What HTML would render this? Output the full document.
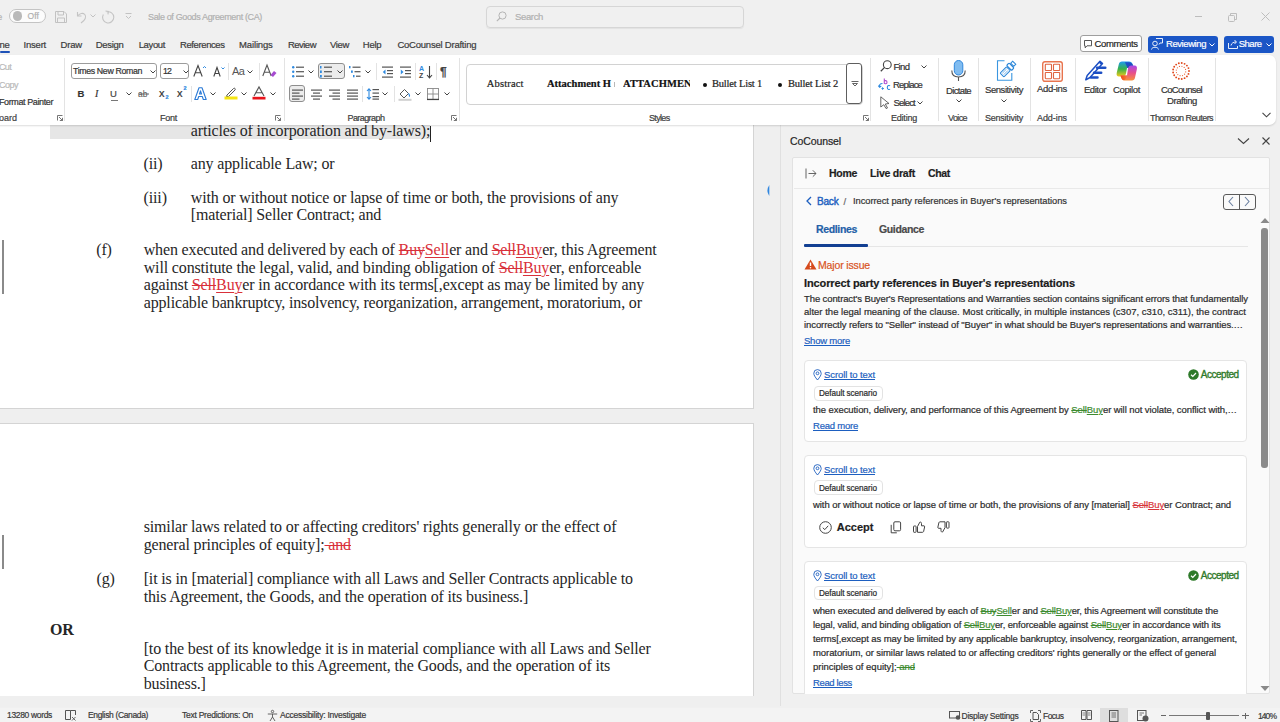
<!DOCTYPE html>
<html><head><meta charset="utf-8">
<style>
*{box-sizing:border-box;margin:0;padding:0}
html,body{width:1280px;height:722px;overflow:hidden;background:#f0f0f0;font-family:"Liberation Sans",sans-serif;color:#262626;position:relative}
.a{position:absolute;white-space:nowrap}
div.a{-webkit-text-stroke:0.2px currentColor}
svg.a{overflow:visible}
.del{color:#d9303a;text-decoration:line-through;text-decoration-thickness:1px}
.ins{color:#d9303a;text-decoration:underline;text-decoration-thickness:1px;text-underline-offset:2px}
.lnk{color:#1d5fc0;text-decoration:underline;text-decoration-thickness:1px;text-underline-offset:0.8px}
.gdel{color:#3d8b2f;text-decoration:line-through;text-decoration-thickness:1px}
.gins{color:#3d8b2f;text-decoration:underline;text-decoration-thickness:1px;text-underline-offset:0.8px}
.rdel{color:#d8353a;text-decoration:line-through;text-decoration-thickness:1px}
.rins{color:#d8353a;text-decoration:underline;text-decoration-thickness:1px;text-underline-offset:0.8px}
</style></head><body>
<div class="a" style="left:0;top:125px;width:780px;height:582px;background:#efefef;overflow:hidden">
<div class="a" style="left:-20px;top:-20px;width:774px;height:304px;background:#fff;border-right:1px solid #d4d4d4;border-bottom:1px solid #d4d4d4"></div>
<div class="a" style="left:-20px;top:298px;width:774px;height:273px;background:#fff;border-right:1px solid #d4d4d4;border-top:1px solid #d4d4d4"></div>
<div class="a" style="left:50px;top:0px;width:380px;height:13.6px;background:#e6e6e6"></div>
<div class="a" style="left:429.5px;top:1px;width:1.0px;height:16px;background:#222"></div>
<div class="a" style="left:2px;top:115px;width:1.5px;height:54px;background:#8a8a8a"></div>
<div class="a" style="left:2px;top:410px;width:1.5px;height:34px;background:#8a8a8a"></div>
<svg class="a" style="left:765px;top:59px" width="6" height="13" viewBox="0 0 6 13"><path d="M4.3 1 Q0.6 6.5 4.3 12 Z" fill="#2f86e0"/></svg>
<div class="a" style="left:190.8px;top:-3.50px;font-family:'Liberation Serif',serif;font-size:16px;line-height:18px;letter-spacing:-0.15px;color:#262626;font-weight:400;-webkit-text-stroke:0">articles of incorporation and by-laws);</div>
<div class="a" style="left:143.6px;top:29.95px;font-family:'Liberation Serif',serif;font-size:16px;line-height:18px;letter-spacing:-0.15px;color:#262626;font-weight:400;-webkit-text-stroke:0">(ii)</div>
<div class="a" style="left:190.8px;top:29.95px;font-family:'Liberation Serif',serif;font-size:16px;line-height:18px;letter-spacing:-0.15px;color:#262626;font-weight:400;-webkit-text-stroke:0">any applicable Law; or</div>
<div class="a" style="left:143.6px;top:63.50px;font-family:'Liberation Serif',serif;font-size:16px;line-height:18px;letter-spacing:-0.15px;color:#262626;font-weight:400;-webkit-text-stroke:0">(iii)</div>
<div class="a" style="left:190.8px;top:63.50px;font-family:'Liberation Serif',serif;font-size:16px;line-height:18px;letter-spacing:-0.15px;color:#262626;font-weight:400;-webkit-text-stroke:0">with or without notice or lapse of time or both, the provisions of any</div>
<div class="a" style="left:190.8px;top:81.40px;font-family:'Liberation Serif',serif;font-size:16px;line-height:18px;letter-spacing:-0.15px;color:#262626;font-weight:400;-webkit-text-stroke:0">[material] Seller Contract; and</div>
<div class="a" style="left:96.25px;top:115.60px;font-family:'Liberation Serif',serif;font-size:16px;line-height:18px;letter-spacing:-0.15px;color:#262626;font-weight:400;-webkit-text-stroke:0">(f)</div>
<div class="a" style="left:143.7px;top:115.60px;font-family:'Liberation Serif',serif;font-size:16px;line-height:18px;letter-spacing:-0.15px;color:#262626;font-weight:400;-webkit-text-stroke:0">when executed and delivered by each of <span class="del">Buy</span><span class="ins">Sell</span>er and <span class="del">Sell</span><span class="ins">Buy</span>er, this Agreement</div>
<div class="a" style="left:143.7px;top:133.50px;font-family:'Liberation Serif',serif;font-size:16px;line-height:18px;letter-spacing:-0.15px;color:#262626;font-weight:400;-webkit-text-stroke:0">will constitute the legal, valid, and binding obligation of <span class="del">Sell</span><span class="ins">Buy</span>er, enforceable</div>
<div class="a" style="left:143.7px;top:151.40px;font-family:'Liberation Serif',serif;font-size:16px;line-height:18px;letter-spacing:-0.15px;color:#262626;font-weight:400;-webkit-text-stroke:0">against <span class="del">Sell</span><span class="ins">Buy</span>er in accordance with its terms[,except as may be limited by any</div>
<div class="a" style="left:143.7px;top:169.30px;font-family:'Liberation Serif',serif;font-size:16px;line-height:18px;letter-spacing:-0.15px;color:#262626;font-weight:400;-webkit-text-stroke:0">applicable bankruptcy, insolvency, reorganization, arrangement, moratorium, or</div>
<div class="a" style="left:143.7px;top:392.80px;font-family:'Liberation Serif',serif;font-size:16px;line-height:18px;letter-spacing:-0.15px;color:#262626;font-weight:400;-webkit-text-stroke:0">similar laws related to or affecting creditors' rights generally or the effect of</div>
<div class="a" style="left:143.7px;top:410.70px;font-family:'Liberation Serif',serif;font-size:16px;line-height:18px;letter-spacing:-0.15px;color:#262626;font-weight:400;-webkit-text-stroke:0">general principles of equity];<span class="del"> and</span></div>
<div class="a" style="left:96.6px;top:445.40px;font-family:'Liberation Serif',serif;font-size:16px;line-height:18px;letter-spacing:-0.15px;color:#262626;font-weight:400;-webkit-text-stroke:0">(g)</div>
<div class="a" style="left:143.7px;top:445.40px;font-family:'Liberation Serif',serif;font-size:16px;line-height:18px;letter-spacing:-0.15px;color:#262626;font-weight:400;-webkit-text-stroke:0">[it is in [material] compliance with all Laws and Seller Contracts applicable to</div>
<div class="a" style="left:143.7px;top:463.20px;font-family:'Liberation Serif',serif;font-size:16px;line-height:18px;letter-spacing:-0.15px;color:#262626;font-weight:400;-webkit-text-stroke:0">this Agreement, the Goods, and the operation of its business.]</div>
<div class="a" style="left:50px;top:496.20px;font-family:'Liberation Serif',serif;font-size:16px;line-height:18px;letter-spacing:-0.15px;color:#262626;font-weight:700;-webkit-text-stroke:0">OR</div>
<div class="a" style="left:143.7px;top:514.60px;font-family:'Liberation Serif',serif;font-size:16px;line-height:18px;letter-spacing:-0.15px;color:#262626;font-weight:400;-webkit-text-stroke:0">[to the best of its knowledge it is in material compliance with all Laws and Seller</div>
<div class="a" style="left:143.7px;top:532.20px;font-family:'Liberation Serif',serif;font-size:16px;line-height:18px;letter-spacing:-0.15px;color:#262626;font-weight:400;-webkit-text-stroke:0">Contracts applicable to this Agreement, the Goods, and the operation of its</div>
<div class="a" style="left:143.7px;top:550.20px;font-family:'Liberation Serif',serif;font-size:16px;line-height:18px;letter-spacing:-0.15px;color:#262626;font-weight:400;-webkit-text-stroke:0">business.]</div>
</div>
<div class="a" style="left:779.8px;top:125px;width:1.6000000000000227px;height:581px;background:#e0e0e0"></div>
<div class="a " style="left:790.00px;top:133.65px;font-size:10.5px;line-height:14.7px;color:#242424;font-weight:400;letter-spacing:-0.105px;font-family:'Liberation Sans',sans-serif;">CoCounsel</div>
<svg class="a" style="left:1237px;top:137px;" width="13" height="8" viewBox="0 0 13 8"><path d="M1 1.5 L6.5 6.5 L12 1.5" fill="none" stroke="#444" stroke-width="1.1"/></svg>
<svg class="a" style="left:1261.5px;top:137.2px;" width="8" height="8" viewBox="0 0 8 8"><path d="M0.5 0.5 L7.5 7.5 M7.5 0.5 L0.5 7.5" fill="none" stroke="#444" stroke-width="1.1"/></svg>
<div class="a" style="left:792px;top:157px;width:478px;height:537px;background:#fafafa;border:1px solid #e2e2e2;border-radius:2px;overflow:hidden">
</div>
<div class="a" style="left:793.5px;top:188px;width:475.5px;height:1px;background:#e9e9e9"></div>
<svg class="a" style="left:805px;top:167.5px;" width="12" height="11" viewBox="0 0 12 11"><path d="M1 0.5 V10.5" stroke="#555" stroke-width="0.9"/><path d="M3.5 5.5 H11 M7.8 2.3 L11 5.5 L7.8 8.7" fill="none" stroke="#555" stroke-width="0.9"/></svg>
<div class="a " style="left:829.00px;top:165.85px;font-size:10.5px;line-height:14.7px;color:#1e1e1e;font-weight:700;letter-spacing:-0.293px;font-family:'Liberation Sans',sans-serif;">Home</div>
<div class="a " style="left:870.00px;top:165.85px;font-size:10.5px;line-height:14.7px;color:#1e1e1e;font-weight:700;letter-spacing:-0.226px;font-family:'Liberation Sans',sans-serif;">Live draft</div>
<div class="a " style="left:928.00px;top:165.85px;font-size:10.5px;line-height:14.7px;color:#1e1e1e;font-weight:700;letter-spacing:-0.333px;font-family:'Liberation Sans',sans-serif;">Chat</div>
<svg class="a" style="left:806px;top:196px;" width="6" height="10" viewBox="0 0 6 10"><path d="M5 1 L1 5 L5 9" fill="none" stroke="#1d5fc0" stroke-width="1.3"/></svg>
<div class="a " style="left:817.00px;top:195.00px;font-size:10px;line-height:14.0px;color:#1d5fc0;font-weight:400;letter-spacing:-0.183px;font-family:'Liberation Sans',sans-serif;-webkit-text-stroke:0.4px #1d5fc0">Back</div>
<div class="a " style="left:843.50px;top:195.35px;font-size:9.5px;line-height:13.299999999999999px;color:#666;font-weight:400;letter-spacing:0.000px;font-family:'Liberation Sans',sans-serif;">/</div>
<div class="a " style="left:853.00px;top:195.49px;font-size:9.3px;line-height:13.02px;color:#333;font-weight:400;letter-spacing:-0.034px;font-family:'Liberation Sans',sans-serif;">Incorrect party references in Buyer's representations</div>
<div class="a" style="left:1222.5px;top:193.5px;width:33px;height:16.5px;border:1.3px solid #5a5a5a;border-radius:3px"></div>
<div class="a" style="left:1239px;top:193.5px;width:1.2000000000000455px;height:16.5px;background:#5a5a5a"></div>
<svg class="a" style="left:1227px;top:196px;" width="8" height="11" viewBox="0 0 8 11"><path d="M6 1 L2 5.5 L6 10" fill="none" stroke="#6a7fa0" stroke-width="1.1"/></svg>
<svg class="a" style="left:1243px;top:196px;" width="8" height="11" viewBox="0 0 8 11"><path d="M2 1 L6 5.5 L2 10" fill="none" stroke="#6a7fa0" stroke-width="1.1"/></svg>
<div class="a " style="left:816.00px;top:222.25px;font-size:10.5px;line-height:14.7px;color:#2360a8;font-weight:700;letter-spacing:-0.346px;font-family:'Liberation Sans',sans-serif;">Redlines</div>
<div class="a " style="left:879.00px;top:222.25px;font-size:10.5px;line-height:14.7px;color:#4a4a4a;font-weight:700;letter-spacing:-0.356px;font-family:'Liberation Sans',sans-serif;">Guidance</div>
<div class="a" style="left:868px;top:245.5px;width:380px;height:1.0px;background:#e6e6e6"></div>
<div class="a" style="left:804px;top:243.8px;width:64px;height:3.0px;background:#123f92;border-radius:1px"></div>
<svg class="a" style="left:1259.5px;top:217px;" width="10" height="7" viewBox="0 0 10 7"><path d="M0.5 6 L5 1 L9.5 6 Z" fill="#8a8a8a"/></svg>
<div class="a" style="left:1261.3px;top:228px;width:6.2999999999999545px;height:239.60000000000002px;background:#8a8a8a;border-radius:3px"></div>
<svg class="a" style="left:1259.5px;top:685px;" width="10" height="7" viewBox="0 0 10 7"><path d="M0.5 1 L5 6 L9.5 1 Z" fill="#8a8a8a"/></svg>
<svg class="a" style="left:803.5px;top:259px;" width="13" height="11" viewBox="0 0 13 11"><path d="M6.5 0.5 L12.5 10.5 L0.5 10.5 Z" fill="#d64a1c"/><path d="M6.5 3.5 V7" stroke="#fff" stroke-width="1.4"/><circle cx="6.5" cy="8.7" r="0.8" fill="#fff"/></svg>
<div class="a " style="left:818.00px;top:257.65px;font-size:10.5px;line-height:14.7px;color:#d9531e;font-weight:400;letter-spacing:-0.153px;font-family:'Liberation Sans',sans-serif;">Major issue</div>
<div class="a " style="left:804.00px;top:275.60px;font-size:11px;line-height:15.399999999999999px;color:#1a1a1a;font-weight:700;letter-spacing:-0.116px;font-family:'Liberation Sans',sans-serif;">Incorrect party references in Buyer's representations</div>
<div class="a " style="left:804.00px;top:291.65px;font-size:9.5px;line-height:13.299999999999999px;color:#2b2b2b;font-weight:400;letter-spacing:-0.105px;font-family:'Liberation Sans',sans-serif;">The contract's Buyer's Representations and Warranties section contains significant errors that fundamentally</div>
<div class="a " style="left:804.00px;top:304.95px;font-size:9.5px;line-height:13.299999999999999px;color:#2b2b2b;font-weight:400;letter-spacing:0.013px;font-family:'Liberation Sans',sans-serif;">alter the legal meaning of the clause. Most critically, in multiple instances (c307, c310, c311), the contract</div>
<div class="a " style="left:804.00px;top:318.35px;font-size:9.5px;line-height:13.299999999999999px;color:#2b2b2b;font-weight:400;letter-spacing:-0.086px;font-family:'Liberation Sans',sans-serif;">incorrectly refers to "Seller" instead of "Buyer" in what should be Buyer's representations and warranties.…</div>
<div class="a " style="left:804.00px;top:334.15px;font-size:9.5px;line-height:13.299999999999999px;color:#262626;font-weight:400;letter-spacing:-0.228px;font-family:'Liberation Sans',sans-serif;"><span class="lnk">Show more</span></div>
<div class="a" style="left:804.4px;top:360px;width:443px;height:82px;background:#fff;border:1px solid #e5e5e5;border-radius:4px"></div>
<svg class="a" style="left:813px;top:369px;" width="9" height="12" viewBox="0 0 9 12"><path d="M4.5 11 C2 8 0.8 6 0.8 4.3 A3.7 3.7 0 0 1 8.2 4.3 C8.2 6 7 8 4.5 11 Z" fill="none" stroke="#1d5fc0" stroke-width="0.9"/><circle cx="4.5" cy="4.3" r="1.4" fill="none" stroke="#1d5fc0" stroke-width="0.9"/></svg>
<div class="a " style="left:824.00px;top:368.35px;font-size:9.5px;line-height:13.299999999999999px;color:#262626;font-weight:400;letter-spacing:-0.091px;font-family:'Liberation Sans',sans-serif;"><span class="lnk">Scroll to text</span></div>
<svg class="a" style="left:1187.5px;top:369.1px;" width="11" height="11" viewBox="0 0 11 11"><circle cx="5.5" cy="5.5" r="5.3" fill="#2e7a2a"/><path d="M3 5.7 L4.8 7.4 L8 4" fill="none" stroke="#fff" stroke-width="1.2"/></svg>
<div class="a " style="left:1200.70px;top:367.60px;font-size:10px;line-height:14.0px;color:#2f7a2a;font-weight:400;letter-spacing:-0.462px;font-family:'Liberation Sans',sans-serif;-webkit-text-stroke:0.35px #2f7a2a">Accepted</div>
<div class="a" style="left:813.5px;top:385.5px;width:69px;height:15.0px;background:#fff;border:1px solid #e3e3e3;border-radius:4px"></div>
<div class="a " style="left:819.00px;top:388.06px;font-size:8.2px;line-height:11.479999999999999px;color:#2a2a2a;font-weight:400;letter-spacing:-0.078px;font-family:'Liberation Sans',sans-serif;">Default scenario</div>
<div class="a " style="left:813.00px;top:403.35px;font-size:9.5px;line-height:13.299999999999999px;color:#2b2b2b;font-weight:400;letter-spacing:-0.074px;font-family:'Liberation Sans',sans-serif;">the execution, delivery, and performance of this Agreement by <span class="gdel">Sell</span><span class="gins">Buy</span>er will not violate, conflict with,…</div>
<div class="a " style="left:813.00px;top:419.35px;font-size:9.5px;line-height:13.299999999999999px;color:#262626;font-weight:400;letter-spacing:-0.222px;font-family:'Liberation Sans',sans-serif;"><span class="lnk">Read more</span></div>
<div class="a" style="left:804.4px;top:454.7px;width:443px;height:93.30000000000001px;background:#fff;border:1px solid #e5e5e5;border-radius:4px"></div>
<svg class="a" style="left:813px;top:464px;" width="9" height="12" viewBox="0 0 9 12"><path d="M4.5 11 C2 8 0.8 6 0.8 4.3 A3.7 3.7 0 0 1 8.2 4.3 C8.2 6 7 8 4.5 11 Z" fill="none" stroke="#1d5fc0" stroke-width="0.9"/><circle cx="4.5" cy="4.3" r="1.4" fill="none" stroke="#1d5fc0" stroke-width="0.9"/></svg>
<div class="a " style="left:824.00px;top:463.35px;font-size:9.5px;line-height:13.299999999999999px;color:#262626;font-weight:400;letter-spacing:-0.091px;font-family:'Liberation Sans',sans-serif;"><span class="lnk">Scroll to text</span></div>
<div class="a" style="left:813.5px;top:480.3px;width:69px;height:14.599999999999966px;background:#fff;border:1px solid #e3e3e3;border-radius:4px"></div>
<div class="a " style="left:819.00px;top:482.66px;font-size:8.2px;line-height:11.479999999999999px;color:#2a2a2a;font-weight:400;letter-spacing:-0.078px;font-family:'Liberation Sans',sans-serif;">Default scenario</div>
<div class="a " style="left:813.00px;top:498.25px;font-size:9.5px;line-height:13.299999999999999px;color:#2b2b2b;font-weight:400;letter-spacing:-0.072px;font-family:'Liberation Sans',sans-serif;">with or without notice or lapse of time or both, the provisions of any [material] <span class="rdel">Sell</span><span class="rins">Buy</span>er Contract; and</div>
<svg class="a" style="left:818.5px;top:520.5px;" width="13" height="13" viewBox="0 0 13 13"><circle cx="6.5" cy="6.5" r="5.8" fill="none" stroke="#444" stroke-width="1"/><path d="M3.8 6.8 L5.8 8.6 L9.2 4.8" fill="none" stroke="#444" stroke-width="1"/></svg>
<div class="a " style="left:836.80px;top:519.60px;font-size:11px;line-height:15.399999999999999px;color:#1e1e1e;font-weight:700;letter-spacing:0.003px;font-family:'Liberation Sans',sans-serif;">Accept</div>
<svg class="a" style="left:888.5px;top:520.5px;" width="13" height="13" viewBox="0 0 13 13"><rect x="4.8" y="0.8" width="6.8" height="9" rx="1.2" fill="none" stroke="#444" stroke-width="1"/><path d="M2.2 3.8 V11.8 H7.8" fill="none" stroke="#444" stroke-width="1"/></svg>
<svg class="a" style="left:911.5px;top:520.5px;" width="14" height="13" viewBox="0 0 14 13"><rect x="1.5" y="5" width="2.6" height="6.3" rx="0.6" fill="none" stroke="#444" stroke-width="1"/><path d="M5.5 5.5 L7.8 1.2 C8.5 0.8 9.5 1.2 9.5 2.5 V4.8 H12 C12.5 4.8 12.8 5.3 12.6 6 L11.6 10.5 C11.4 11 11 11.3 10.5 11.3 H5.5 Z" fill="none" stroke="#444" stroke-width="1" stroke-linejoin="round"/></svg>
<svg class="a" style="left:935.5px;top:520.5px;" width="14" height="13" viewBox="0 0 14 13"><rect x="10.4" y="0.8" width="2.6" height="6.3" rx="0.6" fill="none" stroke="#444" stroke-width="1"/><path d="M9 6.6 L6.7 10.9 C6 11.3 5 10.9 5 9.6 V7.3 H2.5 C2 7.3 1.7 6.8 1.9 6.1 L2.9 1.6 C3.1 1.1 3.5 0.8 4 0.8 H9 Z" fill="none" stroke="#444" stroke-width="1" stroke-linejoin="round"/></svg>
<div class="a" style="left:793px;top:157px;width:476px;height:537px;overflow:hidden">
<div class="a" style="left:11.4px;top:404px;width:443px;height:200px;background:#fff;border:1px solid #e5e5e5;border-radius:4px"></div>
</div>
<svg class="a" style="left:813px;top:569.7px;" width="9" height="12" viewBox="0 0 9 12"><path d="M4.5 11 C2 8 0.8 6 0.8 4.3 A3.7 3.7 0 0 1 8.2 4.3 C8.2 6 7 8 4.5 11 Z" fill="none" stroke="#1d5fc0" stroke-width="0.9"/><circle cx="4.5" cy="4.3" r="1.4" fill="none" stroke="#1d5fc0" stroke-width="0.9"/></svg>
<div class="a " style="left:824.00px;top:569.05px;font-size:9.5px;line-height:13.299999999999999px;color:#262626;font-weight:400;letter-spacing:-0.091px;font-family:'Liberation Sans',sans-serif;"><span class="lnk">Scroll to text</span></div>
<svg class="a" style="left:1187.5px;top:570.0px;" width="11" height="11" viewBox="0 0 11 11"><circle cx="5.5" cy="5.5" r="5.3" fill="#2e7a2a"/><path d="M3 5.7 L4.8 7.4 L8 4" fill="none" stroke="#fff" stroke-width="1.2"/></svg>
<div class="a " style="left:1200.70px;top:568.50px;font-size:10px;line-height:14.0px;color:#2f7a2a;font-weight:400;letter-spacing:-0.462px;font-family:'Liberation Sans',sans-serif;-webkit-text-stroke:0.35px #2f7a2a">Accepted</div>
<div class="a" style="left:813.5px;top:586px;width:69px;height:14px;background:#fff;border:1px solid #e3e3e3;border-radius:4px"></div>
<div class="a " style="left:819.00px;top:588.06px;font-size:8.2px;line-height:11.479999999999999px;color:#2a2a2a;font-weight:400;letter-spacing:-0.078px;font-family:'Liberation Sans',sans-serif;">Default scenario</div>
<div class="a " style="left:813.00px;top:603.95px;font-size:9.5px;line-height:13.299999999999999px;color:#2b2b2b;font-weight:400;letter-spacing:-0.135px;font-family:'Liberation Sans',sans-serif;">when executed and delivered by each of <span class="gdel">Buy</span><span class="gins">Sell</span>er and <span class="gdel">Sell</span><span class="gins">Buy</span>er, this Agreement will constitute the</div>
<div class="a " style="left:813.00px;top:618.05px;font-size:9.5px;line-height:13.299999999999999px;color:#2b2b2b;font-weight:400;letter-spacing:-0.129px;font-family:'Liberation Sans',sans-serif;">legal, valid, and binding obligation of <span class="gdel">Sell</span><span class="gins">Buy</span>er, enforceable against <span class="gdel">Sell</span><span class="gins">Buy</span>er in accordance with its</div>
<div class="a " style="left:813.00px;top:632.05px;font-size:9.5px;line-height:13.299999999999999px;color:#2b2b2b;font-weight:400;letter-spacing:-0.100px;font-family:'Liberation Sans',sans-serif;">terms[,except as may be limited by any applicable bankruptcy, insolvency, reorganization, arrangement,</div>
<div class="a " style="left:813.00px;top:646.15px;font-size:9.5px;line-height:13.299999999999999px;color:#2b2b2b;font-weight:400;letter-spacing:-0.074px;font-family:'Liberation Sans',sans-serif;">moratorium, or similar laws related to or affecting creditors' rights generally or the effect of general</div>
<div class="a " style="left:813.00px;top:660.25px;font-size:9.5px;line-height:13.299999999999999px;color:#2b2b2b;font-weight:400;letter-spacing:-0.017px;font-family:'Liberation Sans',sans-serif;">principles of equity];<span class="gdel"> and</span></div>
<div class="a " style="left:813.00px;top:676.35px;font-size:9.5px;line-height:13.299999999999999px;color:#262626;font-weight:400;letter-spacing:-0.361px;font-family:'Liberation Sans',sans-serif;"><span class="lnk">Read less</span></div>
<div class="a " style="left:-3.00px;top:10.35px;font-size:9.5px;line-height:13.299999999999999px;color:#b4b4b4;font-weight:400;letter-spacing:0.000px;font-family:'Liberation Sans',sans-serif;">e</div>
<div class="a" style="left:9px;top:9px;width:37px;height:13.8px;border:1px solid #c4c4c4;border-radius:7px;background:#fcfcfc"></div>
<div class="a" style="left:12.6px;top:11.4px;width:9.2px;height:9.2px;border-radius:5px;background:#b9b9b9"></div>
<div class="a " style="left:27.50px;top:10.55px;font-size:8.5px;line-height:11.899999999999999px;color:#b0b0b0;font-weight:400;letter-spacing:0.106px;font-family:'Liberation Sans',sans-serif;">Off</div>
<svg class="a" style="left:55px;top:10.5px;" width="12" height="12" viewBox="0 0 12 12"><path d="M0.5 0.5 H9 L11.5 3 V11.5 H0.5 Z" fill="none" stroke="#c2c2c2" stroke-width="1"/><path d="M3 0.5 V4 H8.5 V0.5 M2.5 11.5 V7 H9.5 V11.5" fill="none" stroke="#c2c2c2" stroke-width="1"/></svg>
<svg class="a" style="left:76px;top:10.5px;" width="11" height="12" viewBox="0 0 11 12"><path d="M1.5 1 V5 H5.5" fill="none" stroke="#c4c4c4" stroke-width="1.1"/><path d="M1.8 4.8 C3.5 2.2 7 1.5 8.8 3.5 C10.6 5.8 9.5 8.8 5 12" fill="none" stroke="#c4c4c4" stroke-width="1.1"/></svg>
<svg class="a" style="left:90px;top:14px;" width="6" height="4" viewBox="0 0 6 4"><path d="M0.5 0.5 L3 3 L5.5 0.5" fill="none" stroke="#c2c2c2" stroke-width="1"/></svg>
<svg class="a" style="left:102px;top:10px;" width="13" height="13" viewBox="0 0 13 13"><path d="M4.75 1.9 A5.6 5.6 0 1 1 1.35 4.5" fill="none" stroke="#c4c4c4" stroke-width="1.1"/><path d="M3.2 1.2 H6.2 V4.2" fill="none" stroke="#c4c4c4" stroke-width="1.1" transform="rotate(10 4.7 2.7)"/></svg>
<svg class="a" style="left:125px;top:13px;" width="7" height="7" viewBox="0 0 7 7"><path d="M0.5 0.5 H6.5 M1 3 L3.5 5.5 L6 3" fill="none" stroke="#c2c2c2" stroke-width="1"/></svg>
<div class="a " style="left:148.00px;top:10.70px;font-size:9px;line-height:12.6px;color:#b0b0b0;font-weight:400;letter-spacing:-0.359px;font-family:'Liberation Sans',sans-serif;">Sale of Goods Agreement (CA)</div>
<div class="a" style="left:486.4px;top:5.9px;width:257.3px;height:21.8px;border:1px solid #d6d6d6;border-radius:4px;box-shadow:0 1px 1px rgba(0,0,0,0.06)"></div>
<svg class="a" style="left:495.5px;top:11px;" width="11" height="11" viewBox="0 0 11 11"><circle cx="6.5" cy="4.5" r="3.6" fill="none" stroke="#b5b5b5" stroke-width="1"/><path d="M4 7 L0.8 10.2" stroke="#b5b5b5" stroke-width="1.1"/></svg>
<div class="a " style="left:515.00px;top:10.35px;font-size:9.5px;line-height:13.299999999999999px;color:#b0b0b0;font-weight:400;letter-spacing:-0.350px;font-family:'Liberation Sans',sans-serif;">Search</div>
<div class="a" style="left:1195px;top:16px;width:7px;height:1px;background:#bdbdbd"></div>
<svg class="a" style="left:1228px;top:12.5px;" width="9" height="9" viewBox="0 0 9 9"><rect x="0.5" y="2.5" width="6" height="6" rx="1" fill="none" stroke="#bdbdbd"/><path d="M2.5 2.5 V0.5 H8.5 V6.5 H6.5" fill="none" stroke="#bdbdbd"/></svg>
<svg class="a" style="left:1261px;top:12px;" width="9" height="9" viewBox="0 0 9 9"><path d="M0.5 0.5 L8.5 8.5 M8.5 0.5 L0.5 8.5" stroke="#bdbdbd" stroke-width="1"/></svg>
<div class="a " style="left:-0.60px;top:37.75px;font-size:9.5px;line-height:13.299999999999999px;color:#3b3b3b;font-weight:400;letter-spacing:-0.284px;font-family:'Liberation Sans',sans-serif;">ne</div>
<div class="a " style="left:23.60px;top:37.75px;font-size:9.5px;line-height:13.299999999999999px;color:#3b3b3b;font-weight:400;letter-spacing:-0.227px;font-family:'Liberation Sans',sans-serif;">Insert</div>
<div class="a " style="left:60.60px;top:37.75px;font-size:9.5px;line-height:13.299999999999999px;color:#3b3b3b;font-weight:400;letter-spacing:-0.192px;font-family:'Liberation Sans',sans-serif;">Draw</div>
<div class="a " style="left:95.80px;top:37.75px;font-size:9.5px;line-height:13.299999999999999px;color:#3b3b3b;font-weight:400;letter-spacing:-0.295px;font-family:'Liberation Sans',sans-serif;">Design</div>
<div class="a " style="left:138.70px;top:37.75px;font-size:9.5px;line-height:13.299999999999999px;color:#3b3b3b;font-weight:400;letter-spacing:-0.371px;font-family:'Liberation Sans',sans-serif;">Layout</div>
<div class="a " style="left:180.00px;top:37.75px;font-size:9.5px;line-height:13.299999999999999px;color:#3b3b3b;font-weight:400;letter-spacing:-0.398px;font-family:'Liberation Sans',sans-serif;">References</div>
<div class="a " style="left:239.10px;top:37.75px;font-size:9.5px;line-height:13.299999999999999px;color:#3b3b3b;font-weight:400;letter-spacing:-0.156px;font-family:'Liberation Sans',sans-serif;">Mailings</div>
<div class="a " style="left:287.90px;top:37.75px;font-size:9.5px;line-height:13.299999999999999px;color:#3b3b3b;font-weight:400;letter-spacing:-0.508px;font-family:'Liberation Sans',sans-serif;">Review</div>
<div class="a " style="left:330.00px;top:37.75px;font-size:9.5px;line-height:13.299999999999999px;color:#3b3b3b;font-weight:400;letter-spacing:-0.355px;font-family:'Liberation Sans',sans-serif;">View</div>
<div class="a " style="left:362.80px;top:37.75px;font-size:9.5px;line-height:13.299999999999999px;color:#3b3b3b;font-weight:400;letter-spacing:-0.260px;font-family:'Liberation Sans',sans-serif;">Help</div>
<div class="a " style="left:397.40px;top:37.75px;font-size:9.5px;line-height:13.299999999999999px;color:#3b3b3b;font-weight:400;letter-spacing:-0.222px;font-family:'Liberation Sans',sans-serif;">CoCounsel Drafting</div>
<div class="a" style="left:0px;top:51.3px;width:9.8px;height:1.7000000000000028px;background:#1f52b8;border-radius:1px"></div>
<div class="a" style="left:1080.2px;top:35.3px;width:62.3px;height:17.2px;border:1px solid #9e9e9e;border-radius:3px;background:#fff"></div>
<svg class="a" style="left:1084px;top:39.5px;" width="8" height="9" viewBox="0 0 8 9"><path d="M0.5 0.5 H7.5 V5.8 H3 L1.2 7.8 V5.8 H0.5 Z" fill="none" stroke="#444" stroke-width="0.9"/></svg>
<div class="a " style="left:1094.60px;top:37.35px;font-size:9.5px;line-height:13.299999999999999px;color:#262626;font-weight:400;letter-spacing:-0.366px;font-family:'Liberation Sans',sans-serif;">Comments</div>
<div class="a" style="left:1148.4px;top:35.5px;width:70px;height:17px;border-radius:3px;background:#1b56c6"></div>
<svg class="a" style="left:1151px;top:38px;" width="12" height="12" viewBox="0 0 12 12"><circle cx="4" cy="5.5" r="2.3" fill="none" stroke="#fff" stroke-width="0.9"/><path d="M0.5 11.5 C0.8 8.5 7.2 8.5 7.5 11.5" fill="none" stroke="#fff" stroke-width="0.9"/><path d="M5 0.5 H11.5 V5 H9 L8 6.5" fill="none" stroke="#fff" stroke-width="0.9"/></svg>
<div class="a " style="left:1166.00px;top:37.35px;font-size:9.5px;line-height:13.299999999999999px;color:#fff;font-weight:400;letter-spacing:-0.425px;font-family:'Liberation Sans',sans-serif;">Reviewing</div>
<svg class="a" style="left:1209px;top:42.5px;" width="6" height="4" viewBox="0 0 6 4"><path d="M0.5 0.5 L3 3 L5.5 0.5" fill="none" stroke="#fff" stroke-width="1"/></svg>
<div class="a" style="left:1223.9px;top:35.5px;width:50px;height:17px;border-radius:3px;background:#1b56c6"></div>
<svg class="a" style="left:1228px;top:39px;" width="10" height="10" viewBox="0 0 10 10"><path d="M0.5 4 V9.5 H9.5 V7" fill="none" stroke="#fff" stroke-width="0.9"/><path d="M3 6.5 C3.5 4 5.5 3 8 3 M6.5 1 L8.5 3 L6.5 5" fill="none" stroke="#fff" stroke-width="0.9"/></svg>
<div class="a " style="left:1238.70px;top:37.35px;font-size:9.5px;line-height:13.299999999999999px;color:#fff;font-weight:400;letter-spacing:-0.470px;font-family:'Liberation Sans',sans-serif;">Share</div>
<svg class="a" style="left:1266px;top:42.5px;" width="6" height="4" viewBox="0 0 6 4"><path d="M0.5 0.5 L3 3 L5.5 0.5" fill="none" stroke="#fff" stroke-width="1"/></svg>
<div class="a" style="left:-10px;top:55px;width:1286.4px;height:69.5px;background:#fff;border-radius:7px;box-shadow:0 1px 2px rgba(0,0,0,0.14)"></div>
<div class="a " style="left:-1.00px;top:60.70px;font-size:9px;line-height:12.6px;color:#b9b9b9;font-weight:400;letter-spacing:-0.669px;font-family:'Liberation Sans',sans-serif;">Cut</div>
<div class="a " style="left:-1.00px;top:78.70px;font-size:9px;line-height:12.6px;color:#b9b9b9;font-weight:400;letter-spacing:-0.503px;font-family:'Liberation Sans',sans-serif;">Copy</div>
<div class="a " style="left:-1.00px;top:96.20px;font-size:9px;line-height:12.6px;color:#333;font-weight:400;letter-spacing:-0.394px;font-family:'Liberation Sans',sans-serif;">Format Painter</div>
<div class="a " style="left:-1.00px;top:111.50px;font-size:9px;line-height:12.6px;color:#444;font-weight:400;letter-spacing:-0.004px;font-family:'Liberation Sans',sans-serif;">oard</div>
<svg class="a" style="left:57px;top:114.5px;" width="6" height="6" viewBox="0 0 6 6"><path d="M0.5 5.5 V0.5 H5.5" fill="none" stroke="#666" stroke-width="0.9"/><path d="M2 2 L5.5 5.5 M2.8 5.5 H5.5 V2.8" fill="none" stroke="#666" stroke-width="0.9"/></svg>
<div class="a" style="left:64px;top:58px;width:1px;height:63px;background:#e3e3e3"></div>
<div class="a" style="left:70.5px;top:63px;width:86.5px;height:16.4px;border:1px solid #9c9c9c;border-radius:3px"></div>
<div class="a " style="left:73.00px;top:65.04px;font-size:8.8px;line-height:12.32px;color:#333;font-weight:400;letter-spacing:-0.366px;font-family:'Liberation Sans',sans-serif;">Times New Roman</div>
<svg class="a" style="left:150px;top:70px;" width="6" height="4" viewBox="0 0 6 4"><path d="M0.5 0.5 L3 3 L5.5 0.5" fill="none" stroke="#444" stroke-width="1"/></svg>
<div class="a" style="left:160.4px;top:63.3px;width:28.4px;height:15.5px;border:1px solid #9c9c9c;border-radius:3px"></div>
<div class="a " style="left:163.00px;top:65.04px;font-size:8.8px;line-height:12.32px;color:#333;font-weight:400;letter-spacing:-0.894px;font-family:'Liberation Sans',sans-serif;">12</div>
<svg class="a" style="left:183px;top:70px;" width="6" height="4" viewBox="0 0 6 4"><path d="M0.5 0.5 L3 3 L5.5 0.5" fill="none" stroke="#444" stroke-width="1"/></svg>
<svg class="a" style="left:193px;top:64px;" width="14" height="13" viewBox="0 0 14 13"><path d="M0.8 12.5 L5 1.5 L9.2 12.5 M2.3 8.8 H7.7" fill="none" stroke="#444" stroke-width="1.1"/><path d="M10 4 L11.5 2.5 L13 4" fill="none" stroke="#2f8ae0" stroke-width="1"/></svg>
<svg class="a" style="left:213px;top:66px;" width="12" height="11" viewBox="0 0 12 11"><path d="M0.8 10.5 L4 1.5 L7.2 10.5 M2 7.5 H6" fill="none" stroke="#444" stroke-width="1.1"/><path d="M8.5 1.5 L10 3 L11.5 1.5" fill="none" stroke="#2f8ae0" stroke-width="1"/></svg>
<div class="a" style="left:228px;top:63px;width:1px;height:17px;background:#e3e3e3"></div>
<div class="a " style="left:232.00px;top:64.30px;font-size:11px;line-height:15.399999999999999px;color:#555;font-weight:400;letter-spacing:-0.478px;font-family:'Liberation Sans',sans-serif;-webkit-text-stroke:0">Aa</div>
<svg class="a" style="left:246.5px;top:70px;" width="6" height="4" viewBox="0 0 6 4"><path d="M0.5 0.5 L3 3 L5.5 0.5" fill="none" stroke="#444" stroke-width="1"/></svg>
<div class="a" style="left:259px;top:63px;width:1px;height:17px;background:#e3e3e3"></div>
<svg class="a" style="left:262px;top:64px;" width="15" height="13" viewBox="0 0 15 13"><path d="M0.8 12 L5 1 L9.2 12 M2.3 8.3 H7.7" fill="none" stroke="#555" stroke-width="1.1"/><path d="M8.5 11 L12 7 L14.5 9 L11 13 Z" fill="#a64bd0"/></svg>
<div class="a " style="left:77.50px;top:87.35px;font-size:9.5px;line-height:13.299999999999999px;color:#333;font-weight:700;letter-spacing:0.000px;font-family:'Liberation Sans',sans-serif;">B</div>
<div class="a " style="left:95.00px;top:87.00px;font-size:10px;line-height:14.0px;color:#333;font-weight:400;letter-spacing:0.000px;font-family:'Liberation Serif',serif;"><i>I</i></div>
<div class="a " style="left:110.00px;top:86.85px;font-size:9.5px;line-height:13.299999999999999px;color:#444;font-weight:400;letter-spacing:0.000px;font-family:'Liberation Sans',sans-serif;">U</div>
<div class="a" style="left:110.5px;top:99.5px;width:7.0px;height:1.0px;background:#777"></div>
<svg class="a" style="left:125.5px;top:92px;" width="6" height="4" viewBox="0 0 6 4"><path d="M0.5 0.5 L3 3 L5.5 0.5" fill="none" stroke="#444" stroke-width="1"/></svg>
<svg class="a" style="left:138px;top:89px;" width="11" height="10" viewBox="0 0 11 10"><text x="0" y="8" font-size="8.5" font-family="Liberation Sans" fill="#555">ab</text><path d="M0 5 H11" stroke="#555" stroke-width="0.9"/></svg>
<div class="a " style="left:159.00px;top:85.80px;font-size:11px;line-height:15.399999999999999px;color:#333;font-weight:400;letter-spacing:0.000px;font-family:'Liberation Sans',sans-serif;">x</div>
<div class="a " style="left:165.50px;top:93.65px;font-size:5.5px;line-height:7.699999999999999px;color:#2f8ae0;font-weight:700;letter-spacing:0.000px;font-family:'Liberation Sans',sans-serif;">2</div>
<div class="a " style="left:177.00px;top:85.80px;font-size:11px;line-height:15.399999999999999px;color:#333;font-weight:400;letter-spacing:0.000px;font-family:'Liberation Sans',sans-serif;">x</div>
<div class="a " style="left:183.50px;top:85.15px;font-size:5.5px;line-height:7.699999999999999px;color:#2f8ae0;font-weight:700;letter-spacing:0.000px;font-family:'Liberation Sans',sans-serif;">2</div>
<div class="a" style="left:191px;top:86px;width:1px;height:16px;background:#e3e3e3"></div>
<svg class="a" style="left:194px;top:87px;" width="13" height="13" viewBox="0 0 13 13"><path d="M0.8 12.5 L5 0.8 H8 L12.2 12.5 H9.3 L8.3 9.5 H4.7 L3.7 12.5 Z M5.5 7 H7.5 L6.5 3.8 Z" fill="#fff" stroke="#2a7ad6" stroke-width="1.1" stroke-linejoin="round"/></svg>
<svg class="a" style="left:209.5px;top:92px;" width="6" height="4" viewBox="0 0 6 4"><path d="M0.5 0.5 L3 3 L5.5 0.5" fill="none" stroke="#444" stroke-width="1"/></svg>
<svg class="a" style="left:224px;top:86px;" width="14" height="14" viewBox="0 0 14 14"><path d="M3 9 L9.5 2.5 C10.5 1.5 12 3 11 4 L4.5 10.5 L2.5 10.5 Z" fill="none" stroke="#555" stroke-width="1"/><rect x="0.5" y="10.5" width="13" height="3" fill="#f5e514"/></svg>
<svg class="a" style="left:240.5px;top:92px;" width="6" height="4" viewBox="0 0 6 4"><path d="M0.5 0.5 L3 3 L5.5 0.5" fill="none" stroke="#444" stroke-width="1"/></svg>
<svg class="a" style="left:252px;top:86px;" width="14" height="14" viewBox="0 0 14 14"><path d="M2 10 L7 1 L12 10 M3.8 6.8 H10.2" fill="none" stroke="#555" stroke-width="1.1"/><rect x="0.5" y="10.8" width="13" height="2.7" fill="#e8141c"/></svg>
<svg class="a" style="left:269.5px;top:92px;" width="6" height="4" viewBox="0 0 6 4"><path d="M0.5 0.5 L3 3 L5.5 0.5" fill="none" stroke="#444" stroke-width="1"/></svg>
<div class="a " style="left:160.00px;top:111.70px;font-size:9px;line-height:12.6px;color:#3d3d3d;font-weight:400;letter-spacing:-0.252px;font-family:'Liberation Sans',sans-serif;">Font</div>
<svg class="a" style="left:274.5px;top:114.5px;" width="6" height="6" viewBox="0 0 6 6"><path d="M0.5 5.5 V0.5 H5.5" fill="none" stroke="#666" stroke-width="0.9"/><path d="M2 2 L5.5 5.5 M2.8 5.5 H5.5 V2.8" fill="none" stroke="#666" stroke-width="0.9"/></svg>
<div class="a" style="left:284px;top:58px;width:1px;height:63px;background:#e3e3e3"></div>
<svg class="a" style="left:291.5px;top:65.5px;" width="12" height="12" viewBox="0 0 12 12"><circle cx="1.2" cy="1.2" r="1.2" fill="#2f8ae0"/><circle cx="1.2" cy="5.7" r="1.2" fill="#2f8ae0"/><circle cx="1.2" cy="10.2" r="1.2" fill="#2f8ae0"/><rect x="4" y="0.6" width="8" height="1.2" fill="#555"/><rect x="4" y="5.1" width="8" height="1.2" fill="#555"/><rect x="4" y="9.6" width="8" height="1.2" fill="#555"/></svg>
<svg class="a" style="left:308px;top:70px;" width="6" height="4" viewBox="0 0 6 4"><path d="M0.5 0.5 L3 3 L5.5 0.5" fill="none" stroke="#444" stroke-width="1"/></svg>
<div class="a" style="left:317.9px;top:63.3px;width:27px;height:16.1px;border:1px solid #8e8e8e;border-radius:3px;background:#ececec"></div>
<svg class="a" style="left:320px;top:65.5px;" width="12" height="12" viewBox="0 0 12 12"><rect x="0" y="0" width="1.5" height="2.5" fill="#2f8ae0"/><rect x="0" y="4.5" width="1.8" height="2.5" fill="#2f8ae0"/><rect x="0" y="9" width="1.8" height="2.5" fill="#2f8ae0"/><rect x="4" y="0.6" width="8" height="1.2" fill="#555"/><rect x="4" y="5.1" width="8" height="1.2" fill="#555"/><rect x="4" y="9.6" width="8" height="1.2" fill="#555"/></svg>
<svg class="a" style="left:337px;top:70px;" width="6" height="4" viewBox="0 0 6 4"><path d="M0.5 0.5 L3 3 L5.5 0.5" fill="none" stroke="#444" stroke-width="1"/></svg>
<svg class="a" style="left:349px;top:65.5px;" width="12" height="12" viewBox="0 0 12 12"><rect x="0" y="0" width="1.5" height="2.3" fill="#2f8ae0"/><rect x="2" y="4.5" width="1.8" height="2.3" fill="#2f8ae0"/><rect x="4" y="9" width="1.5" height="2.3" fill="#2f8ae0"/><rect x="3.5" y="0.6" width="8" height="1.2" fill="#555"/><rect x="5.5" y="5.1" width="6" height="1.2" fill="#555"/><rect x="7" y="9.6" width="4.5" height="1.2" fill="#555"/></svg>
<svg class="a" style="left:364.5px;top:70px;" width="6" height="4" viewBox="0 0 6 4"><path d="M0.5 0.5 L3 3 L5.5 0.5" fill="none" stroke="#444" stroke-width="1"/></svg>
<div class="a" style="left:376px;top:63px;width:1px;height:17px;background:#e3e3e3"></div>
<svg class="a" style="left:381.5px;top:65.5px;" width="11" height="12" viewBox="0 0 11 12"><rect x="0" y="0.5" width="11" height="1.2" fill="#555"/><rect x="5" y="4" width="6" height="1.2" fill="#555"/><rect x="5" y="7" width="6" height="1.2" fill="#555"/><rect x="0" y="10.5" width="11" height="1.2" fill="#555"/><path d="M3.5 3.5 L0.8 6 L3.5 8.5 Z" fill="#2f8ae0"/></svg>
<svg class="a" style="left:399.5px;top:65.5px;" width="11" height="12" viewBox="0 0 11 12"><rect x="0" y="0.5" width="11" height="1.2" fill="#555"/><rect x="5" y="4" width="6" height="1.2" fill="#555"/><rect x="5" y="7" width="6" height="1.2" fill="#555"/><rect x="0" y="10.5" width="11" height="1.2" fill="#555"/><path d="M0.8 3.5 L3.5 6 L0.8 8.5 Z" fill="#2f8ae0"/></svg>
<div class="a" style="left:415px;top:63px;width:1px;height:17px;background:#e3e3e3"></div>
<svg class="a" style="left:418.5px;top:64.5px;" width="14" height="14" viewBox="0 0 14 14"><text x="0" y="6" font-size="7" font-family="Liberation Sans" font-weight="bold" fill="#2f8ae0">A</text><text x="0" y="13" font-size="7" font-family="Liberation Sans" font-weight="bold" fill="#444">Z</text><path d="M10.5 1 V12.5 M8 10 L10.5 12.8 L13 10" fill="none" stroke="#444" stroke-width="1.1"/></svg>
<div class="a" style="left:436px;top:63px;width:1px;height:17px;background:#e3e3e3"></div>
<div class="a " style="left:440.00px;top:63.60px;font-size:12px;line-height:16.799999999999997px;color:#444;font-weight:700;letter-spacing:0.000px;font-family:'Liberation Sans',sans-serif;">¶</div>
<div class="a" style="left:289.3px;top:85.4px;width:16.2px;height:16.9px;border:1px solid #8e8e8e;border-radius:3px;background:#ececec"></div>
<svg class="a" style="left:292px;top:88.5px;" width="11" height="11" viewBox="0 0 11 11"><rect x="0" y="0.5" width="11" height="1.2" fill="#555"/><rect x="0" y="3.5" width="7.5" height="1.2" fill="#555"/><rect x="0" y="6.5" width="11" height="1.2" fill="#555"/><rect x="0" y="9.5" width="7.5" height="1.2" fill="#555"/></svg>
<svg class="a" style="left:310.5px;top:88.5px;" width="11" height="11" viewBox="0 0 11 11"><rect x="0" y="0.5" width="11" height="1.2" fill="#555"/><rect x="2" y="3.5" width="7" height="1.2" fill="#555"/><rect x="0" y="6.5" width="11" height="1.2" fill="#555"/><rect x="2" y="9.5" width="7" height="1.2" fill="#555"/></svg>
<svg class="a" style="left:328.5px;top:88.5px;" width="11" height="11" viewBox="0 0 11 11"><rect x="0" y="0.5" width="11" height="1.2" fill="#555"/><rect x="3.5" y="3.5" width="7.5" height="1.2" fill="#555"/><rect x="0" y="6.5" width="11" height="1.2" fill="#555"/><rect x="3.5" y="9.5" width="7.5" height="1.2" fill="#555"/></svg>
<svg class="a" style="left:346.5px;top:88.5px;" width="11" height="11" viewBox="0 0 11 11"><rect x="0" y="0.5" width="11" height="1.2" fill="#555"/><rect x="0" y="3.5" width="11" height="1.2" fill="#555"/><rect x="0" y="6.5" width="11" height="1.2" fill="#555"/><rect x="0" y="9.5" width="11" height="1.2" fill="#555"/></svg>
<div class="a" style="left:362px;top:86px;width:1px;height:16px;background:#e3e3e3"></div>
<svg class="a" style="left:366.5px;top:87.5px;" width="12" height="12" viewBox="0 0 12 12"><path d="M2 1 V11 M0 3 L2 0.8 L4 3 M0 9 L2 11.2 L4 9" fill="none" stroke="#2f8ae0" stroke-width="1.1"/><rect x="5.5" y="1" width="6.5" height="1.2" fill="#555"/><rect x="5.5" y="4.5" width="6.5" height="1.2" fill="#555"/><rect x="5.5" y="8" width="6.5" height="1.2" fill="#555"/><rect x="5.5" y="10.5" width="6.5" height="1.2" fill="#555"/></svg>
<svg class="a" style="left:381.5px;top:92px;" width="6" height="4" viewBox="0 0 6 4"><path d="M0.5 0.5 L3 3 L5.5 0.5" fill="none" stroke="#444" stroke-width="1"/></svg>
<div class="a" style="left:394px;top:86px;width:1px;height:16px;background:#e3e3e3"></div>
<svg class="a" style="left:397.5px;top:86.5px;" width="14" height="14" viewBox="0 0 14 14"><path d="M2 7 L6.5 2.5 L10.5 6.5 L6 11 Z" fill="none" stroke="#555" stroke-width="1"/><path d="M10.5 6.5 C11.5 8 12 9 11 9.5" fill="none" stroke="#2f8ae0" stroke-width="1.2"/><rect x="0.5" y="11.8" width="13" height="2" fill="#cfcfcf"/></svg>
<svg class="a" style="left:414.5px;top:92px;" width="6" height="4" viewBox="0 0 6 4"><path d="M0.5 0.5 L3 3 L5.5 0.5" fill="none" stroke="#444" stroke-width="1"/></svg>
<svg class="a" style="left:426.5px;top:87.5px;" width="12" height="12" viewBox="0 0 12 12"><rect x="0.5" y="0.5" width="11" height="11" fill="none" stroke="#888" stroke-width="0.9"/><path d="M6 0.5 V11.5 M0.5 6 H11.5" stroke="#888" stroke-width="0.9"/><rect x="0" y="10.8" width="12" height="1.3" fill="#444"/></svg>
<svg class="a" style="left:443.5px;top:92px;" width="6" height="4" viewBox="0 0 6 4"><path d="M0.5 0.5 L3 3 L5.5 0.5" fill="none" stroke="#444" stroke-width="1"/></svg>
<div class="a " style="left:347.50px;top:111.70px;font-size:9px;line-height:12.6px;color:#3d3d3d;font-weight:400;letter-spacing:-0.581px;font-family:'Liberation Sans',sans-serif;">Paragraph</div>
<svg class="a" style="left:450.5px;top:114.5px;" width="6" height="6" viewBox="0 0 6 6"><path d="M0.5 5.5 V0.5 H5.5" fill="none" stroke="#666" stroke-width="0.9"/><path d="M2 2 L5.5 5.5 M2.8 5.5 H5.5 V2.8" fill="none" stroke="#666" stroke-width="0.9"/></svg>
<div class="a" style="left:459px;top:58px;width:1px;height:63px;background:#e3e3e3"></div>
<div class="a" style="left:465.6px;top:63.6px;width:397px;height:41.1px;border:1px solid #d2d2d2;border-radius:4px"></div>
<div class="a" style="left:846.2px;top:63.2px;width:16.3px;height:41.2px;border:1px solid #5e5e5e;border-radius:3px;background:#fff"></div>
<svg class="a" style="left:850.5px;top:80.5px;" width="8" height="6" viewBox="0 0 8 6"><path d="M0.5 0.5 H7.5 M1.5 2.5 L4 5 L6.5 2.5 Z" fill="none" stroke="#555" stroke-width="0.9"/></svg>
<div class="a " style="left:486.70px;top:76.65px;font-size:10.5px;line-height:14.7px;color:#222;font-weight:400;letter-spacing:0.179px;font-family:'Liberation Serif',serif;">Abstract</div>
<div class="a " style="left:547.00px;top:76.65px;font-size:10.5px;line-height:14.7px;color:#111;font-weight:700;letter-spacing:0.011px;font-family:'Liberation Serif',serif;">Attachment H</div>
<div class="a" style="left:613.5px;top:82px;width:1.5px;height:5px;background:#b8b8b8"></div>
<div class="a" style="left:623px;top:76px;width:67px;height:16px;overflow:hidden">
<div class="a" style="left:0;top:0;font-family:'Liberation Serif',serif;font-weight:700;font-size:10.5px;line-height:16px;color:#111;letter-spacing:0.1px">ATTACHMENT</div>
</div>
<div class="a" style="left:702.5px;top:83px;width:4px;height:4px;border-radius:2px;background:#111"></div>
<div class="a " style="left:712.00px;top:76.65px;font-size:10.5px;line-height:14.7px;color:#222;font-weight:400;letter-spacing:-0.192px;font-family:'Liberation Serif',serif;">Bullet List 1</div>
<div class="a" style="left:778px;top:83px;width:4px;height:4px;border-radius:2px;background:#111"></div>
<div class="a " style="left:788.00px;top:76.65px;font-size:10.5px;line-height:14.7px;color:#222;font-weight:400;letter-spacing:-0.192px;font-family:'Liberation Serif',serif;">Bullet List 2</div>
<div class="a " style="left:649.00px;top:111.70px;font-size:9px;line-height:12.6px;color:#3d3d3d;font-weight:400;letter-spacing:-0.668px;font-family:'Liberation Sans',sans-serif;">Styles</div>
<svg class="a" style="left:862.5px;top:114.5px;" width="6" height="6" viewBox="0 0 6 6"><path d="M0.5 5.5 V0.5 H5.5" fill="none" stroke="#666" stroke-width="0.9"/><path d="M2 2 L5.5 5.5 M2.8 5.5 H5.5 V2.8" fill="none" stroke="#666" stroke-width="0.9"/></svg>
<div class="a" style="left:870px;top:58px;width:1px;height:63px;background:#e3e3e3"></div>
<svg class="a" style="left:879.5px;top:60px;" width="12" height="12" viewBox="0 0 12 12"><circle cx="7.3" cy="4.7" r="3.9" fill="none" stroke="#444" stroke-width="1.1"/><path d="M4.6 7.4 L0.8 11.2" stroke="#444" stroke-width="1.3"/></svg>
<div class="a " style="left:893.40px;top:59.65px;font-size:9.5px;line-height:13.299999999999999px;color:#333;font-weight:400;letter-spacing:-0.620px;font-family:'Liberation Sans',sans-serif;">Find</div>
<svg class="a" style="left:920.5px;top:64.5px;" width="6" height="4" viewBox="0 0 6 4"><path d="M0.5 0.5 L3 3 L5.5 0.5" fill="none" stroke="#444" stroke-width="1"/></svg>
<svg class="a" style="left:878px;top:78px;" width="14" height="13" viewBox="0 0 14 13"><path d="M6.3 0.5 V5.8 M6.3 3.3 C6.8 2.3 9 2.3 9 4.2 C9 6 6.8 6.2 6.3 5" fill="none" stroke="#b050d0" stroke-width="1.1"/><path d="M4.5 5.5 C2 5.5 1 7 1.5 9 M0.3 7.6 L1.6 9.3 L3.2 8" fill="none" stroke="#2f8ae0" stroke-width="1.1"/><path d="M3.5 10.5 L5.5 10.5 M4.3 9.3 L5.6 10.5 L4.3 11.7" fill="none" stroke="#2f8ae0" stroke-width="1"/><path d="M12 8 C11.5 7.2 9.3 7.2 9.3 9.5 C9.3 11.8 11.5 11.8 12 11" fill="none" stroke="#2f8ae0" stroke-width="1.1"/></svg>
<div class="a " style="left:893.00px;top:78.05px;font-size:9.5px;line-height:13.299999999999999px;color:#333;font-weight:400;letter-spacing:-0.837px;font-family:'Liberation Sans',sans-serif;">Replace</div>
<svg class="a" style="left:879.5px;top:96px;" width="10" height="13" viewBox="0 0 10 13"><path d="M0.8 0.8 L9 7.5 L5.3 8 L7.5 12 L6 12.5 L3.8 8.7 L0.8 11 Z" fill="none" stroke="#555" stroke-width="0.9"/></svg>
<div class="a " style="left:893.40px;top:96.05px;font-size:9.5px;line-height:13.299999999999999px;color:#333;font-weight:400;letter-spacing:-0.817px;font-family:'Liberation Sans',sans-serif;">Select</div>
<svg class="a" style="left:916.8px;top:101px;" width="6" height="4" viewBox="0 0 6 4"><path d="M0.5 0.5 L3 3 L5.5 0.5" fill="none" stroke="#444" stroke-width="1"/></svg>
<div class="a " style="left:891.00px;top:111.70px;font-size:9px;line-height:12.6px;color:#3d3d3d;font-weight:400;letter-spacing:-0.217px;font-family:'Liberation Sans',sans-serif;">Editing</div>
<div class="a" style="left:938px;top:58px;width:1px;height:63px;background:#e3e3e3"></div>
<svg class="a" style="left:949.5px;top:59px;" width="17" height="23" viewBox="0 0 17 23"><rect x="4.3" y="1.5" width="8.5" height="14.5" rx="4.25" fill="#80bcf0" stroke="#2e86dc" stroke-width="1"/><path d="M1.8 11.5 C1.8 15.5 4.5 18 8.5 18 C12.5 18 15.2 15.5 15.2 11.5" fill="none" stroke="#555" stroke-width="1.1"/><path d="M8.5 18 V22" stroke="#555" stroke-width="1.1"/></svg>
<div class="a " style="left:946.00px;top:83.65px;font-size:9.5px;line-height:13.299999999999999px;color:#333;font-weight:400;letter-spacing:-0.652px;font-family:'Liberation Sans',sans-serif;">Dictate</div>
<svg class="a" style="left:955.5px;top:99px;" width="6" height="4" viewBox="0 0 6 4"><path d="M0.5 0.5 L3 3 L5.5 0.5" fill="none" stroke="#444" stroke-width="1"/></svg>
<div class="a " style="left:948.00px;top:111.70px;font-size:9px;line-height:12.6px;color:#3d3d3d;font-weight:400;letter-spacing:-0.604px;font-family:'Liberation Sans',sans-serif;">Voice</div>
<div class="a" style="left:978px;top:58px;width:1px;height:63px;background:#e3e3e3"></div>
<svg class="a" style="left:995px;top:59px;" width="23" height="23" viewBox="0 0 23 23"><path d="M9.5 1.8 H2.5 V21.3 H16.8 V14" fill="none" stroke="#3a96e0" stroke-width="1.1"/><g transform="rotate(-45 13 10)"><rect x="4.5" y="7.3" width="9" height="5.4" rx="0.8" fill="#fff" stroke="#2a86d8" stroke-width="1"/><path d="M6 9 H12 M6 11 H12" stroke="#2a86d8" stroke-width="0.6"/><rect x="14.5" y="6.5" width="3.5" height="7" rx="1" fill="#fff" stroke="#2a86d8" stroke-width="1.2"/><rect x="19" y="7.8" width="2.8" height="4.4" fill="#fff" stroke="#2a86d8" stroke-width="1"/></g></svg>
<div class="a " style="left:985.00px;top:83.35px;font-size:9.5px;line-height:13.299999999999999px;color:#333;font-weight:400;letter-spacing:-0.433px;font-family:'Liberation Sans',sans-serif;">Sensitivity</div>
<svg class="a" style="left:1001px;top:99px;" width="6" height="4" viewBox="0 0 6 4"><path d="M0.5 0.5 L3 3 L5.5 0.5" fill="none" stroke="#444" stroke-width="1"/></svg>
<div class="a " style="left:985.00px;top:111.70px;font-size:9px;line-height:12.6px;color:#3d3d3d;font-weight:400;letter-spacing:-0.229px;font-family:'Liberation Sans',sans-serif;">Sensitivity</div>
<div class="a" style="left:1030px;top:58px;width:1px;height:63px;background:#e3e3e3"></div>
<svg class="a" style="left:1042px;top:60.5px;" width="21" height="21" viewBox="0 0 21 21"><rect x="0.7" y="0.7" width="19.6" height="19.6" rx="2.2" fill="none" stroke="#e8744e" stroke-width="1.4"/><rect x="3.3" y="3.3" width="6.2" height="6.2" rx="0.6" fill="none" stroke="#e06440" stroke-width="1.1"/><rect x="11.5" y="3.3" width="6.2" height="6.2" rx="0.6" fill="none" stroke="#e06440" stroke-width="1.1"/><rect x="3.3" y="11.5" width="6.2" height="6.2" rx="0.6" fill="none" stroke="#e06440" stroke-width="1.1"/><rect x="11.5" y="11.5" width="6.2" height="6.2" rx="0.6" fill="none" stroke="#e06440" stroke-width="1.1"/></svg>
<div class="a " style="left:1037.00px;top:82.35px;font-size:9.5px;line-height:13.299999999999999px;color:#333;font-weight:400;letter-spacing:-0.316px;font-family:'Liberation Sans',sans-serif;">Add-ins</div>
<div class="a " style="left:1037.00px;top:111.70px;font-size:9px;line-height:12.6px;color:#3d3d3d;font-weight:400;letter-spacing:-0.074px;font-family:'Liberation Sans',sans-serif;">Add-ins</div>
<div class="a" style="left:1075px;top:58px;width:1px;height:63px;background:#e3e3e3"></div>
<svg class="a" style="left:1083px;top:59px;" width="24" height="23" viewBox="0 0 24 23"><path d="M17 2.2 L19.5 4.5 L7 18.5 L2.8 20.8 L4.2 16.5 Z" fill="#fff" stroke="#1c4fc4" stroke-width="1.5" stroke-linejoin="round"/><path d="M16.5 3 L19 5.2" stroke="#1c4fc4" stroke-width="2.2"/><path d="M14 8.8 H22.3 M11 13.8 H18.2 M8 18.4 H14.5" stroke="#1c4fc4" stroke-width="2.5" stroke-linecap="round"/></svg>
<div class="a " style="left:1084.00px;top:83.05px;font-size:9.5px;line-height:13.299999999999999px;color:#333;font-weight:400;letter-spacing:-0.470px;font-family:'Liberation Sans',sans-serif;">Editor</div>
<svg class="a" style="left:1115.5px;top:60.5px;" width="22" height="20" viewBox="0 0 22 20"><defs><linearGradient id="cg1" x1="0" y1="0" x2="0" y2="1"><stop offset="0" stop-color="#1e9af0"/><stop offset="0.5" stop-color="#36b24a"/><stop offset="1" stop-color="#f2c81a"/></linearGradient><linearGradient id="cg2" x1="0" y1="0" x2="0" y2="1"><stop offset="0" stop-color="#a848e8"/><stop offset="0.5" stop-color="#e8508a"/><stop offset="1" stop-color="#f8903a"/></linearGradient><linearGradient id="cg3" x1="0" y1="0" x2="1" y2="0"><stop offset="0" stop-color="#f04a1a"/><stop offset="1" stop-color="#f8803a"/></linearGradient></defs><path d="M6 0.5 H13 C15 0.5 16 1.5 16.8 3.5 L18 7 H11 L10 12.5 C9.5 14.5 8.5 15.5 6.5 15.5 H3 C1 15.5 0.3 14 0.7 12 L2.8 3.2 C3.2 1.5 4.3 0.5 6 0.5 Z" fill="url(#cg1)"/><path d="M9 1.2 H13 C15 1.2 16 2 16.8 4 L17.6 7 H11.5 Z" fill="#1f3fc8" opacity="0.85"/><path d="M16 19.5 H9 C7 19.5 6 18.5 5.2 16.5 L4.5 14.5 H11 L12 7.5 C12.5 5.5 13.5 4.5 15.5 4.5 H18.5 C20.5 4.5 21.3 6 20.9 8 L19 16.8 C18.6 18.5 17.6 19.5 16 19.5 Z" fill="url(#cg2)"/><path d="M5.2 16.5 L4.5 14.5 H11 L11.6 11 C11 17 9 19.5 7.5 19.3 C6.3 19 5.6 17.8 5.2 16.5 Z" fill="url(#cg3)"/></svg>
<div class="a " style="left:1113.00px;top:83.05px;font-size:9.5px;line-height:13.299999999999999px;color:#333;font-weight:400;letter-spacing:-0.367px;font-family:'Liberation Sans',sans-serif;">Copilot</div>
<div class="a" style="left:1148px;top:58px;width:1px;height:63px;background:#e3e3e3"></div>
<svg class="a" style="left:1171px;top:61px;" width="20" height="20" viewBox="0 0 20 20"><circle cx="18.00" cy="10.00" r="0.95" fill="#e04a1e"/><circle cx="17.46" cy="12.89" r="0.95" fill="#e04a1e"/><circle cx="15.91" cy="15.39" r="0.95" fill="#e04a1e"/><circle cx="13.57" cy="17.16" r="0.95" fill="#e04a1e"/><circle cx="10.74" cy="17.97" r="0.95" fill="#e04a1e"/><circle cx="7.81" cy="17.69" r="0.95" fill="#e04a1e"/><circle cx="5.18" cy="16.38" r="0.95" fill="#e04a1e"/><circle cx="3.20" cy="14.21" r="0.95" fill="#e04a1e"/><circle cx="2.14" cy="11.47" r="0.95" fill="#e04a1e"/><circle cx="2.14" cy="8.53" r="0.95" fill="#e04a1e"/><circle cx="3.20" cy="5.79" r="0.95" fill="#e04a1e"/><circle cx="5.18" cy="3.62" r="0.95" fill="#e04a1e"/><circle cx="7.81" cy="2.31" r="0.95" fill="#e04a1e"/><circle cx="10.74" cy="2.03" r="0.95" fill="#e04a1e"/><circle cx="13.57" cy="2.84" r="0.95" fill="#e04a1e"/><circle cx="15.91" cy="4.61" r="0.95" fill="#e04a1e"/><circle cx="17.46" cy="7.11" r="0.95" fill="#e04a1e"/><circle cx="14.70" cy="10.95" r="0.6" fill="#e8663a"/><circle cx="13.60" cy="13.18" r="0.6" fill="#e8663a"/><circle cx="11.53" cy="14.55" r="0.6" fill="#e8663a"/><circle cx="9.05" cy="14.70" r="0.6" fill="#e8663a"/><circle cx="6.82" cy="13.60" r="0.6" fill="#e8663a"/><circle cx="5.45" cy="11.53" r="0.6" fill="#e8663a"/><circle cx="5.30" cy="9.05" r="0.6" fill="#e8663a"/><circle cx="6.40" cy="6.82" r="0.6" fill="#e8663a"/><circle cx="8.47" cy="5.45" r="0.6" fill="#e8663a"/><circle cx="10.95" cy="5.30" r="0.6" fill="#e8663a"/><circle cx="13.18" cy="6.40" r="0.6" fill="#e8663a"/><circle cx="14.55" cy="8.47" r="0.6" fill="#e8663a"/></svg>
<div class="a " style="left:1161.00px;top:83.15px;font-size:9.5px;line-height:13.299999999999999px;color:#333;font-weight:400;letter-spacing:-0.667px;font-family:'Liberation Sans',sans-serif;">CoCounsel</div>
<div class="a " style="left:1167.00px;top:94.05px;font-size:9.5px;line-height:13.299999999999999px;color:#333;font-weight:400;letter-spacing:-0.408px;font-family:'Liberation Sans',sans-serif;">Drafting</div>
<div class="a " style="left:1150.00px;top:111.70px;font-size:9px;line-height:12.6px;color:#3d3d3d;font-weight:400;letter-spacing:-0.569px;font-family:'Liberation Sans',sans-serif;">Thomson Reuters</div>
<div class="a" style="left:1215px;top:58px;width:1px;height:63px;background:#e3e3e3"></div>
<svg class="a" style="left:1262px;top:112px;" width="9" height="6" viewBox="0 0 9 6"><path d="M0.5 0.8 L4.5 4.8 L8.5 0.8" fill="none" stroke="#444" stroke-width="1.1"/></svg>
<div class="a" style="left:0px;top:707.5px;width:1280px;height:14.5px;background:#f3f3f3"></div>
<div class="a " style="left:7.00px;top:710.35px;font-size:8.5px;line-height:11.899999999999999px;color:#3a3a3a;font-weight:400;letter-spacing:-0.334px;font-family:'Liberation Sans',sans-serif;">13280 words</div>
<svg class="a" style="left:65px;top:710px;" width="12" height="11" viewBox="0 0 12 11"><path d="M0.5 0.5 H5.5 V9.5 H0.5 Z M5.5 0.5 H10.5 V5" fill="none" stroke="#555" stroke-width="1"/><path d="M7 7 L10.5 10.5 M10.5 7 L7 10.5" stroke="#555" stroke-width="0.9"/></svg>
<div class="a " style="left:88.00px;top:710.35px;font-size:8.5px;line-height:11.899999999999999px;color:#3a3a3a;font-weight:400;letter-spacing:-0.355px;font-family:'Liberation Sans',sans-serif;">English (Canada)</div>
<div class="a " style="left:182.00px;top:710.35px;font-size:8.5px;line-height:11.899999999999999px;color:#3a3a3a;font-weight:400;letter-spacing:-0.253px;font-family:'Liberation Sans',sans-serif;">Text Predictions: On</div>
<svg class="a" style="left:266.5px;top:709.5px;" width="11" height="12" viewBox="0 0 11 12"><circle cx="5.5" cy="1.5" r="1.2" fill="none" stroke="#555" stroke-width="0.9"/><path d="M0.8 4 H10.2 M5.5 4 V7 L3 11 M5.5 7 L8 11" fill="none" stroke="#555" stroke-width="0.9"/></svg>
<div class="a " style="left:280.00px;top:710.35px;font-size:8.5px;line-height:11.899999999999999px;color:#3a3a3a;font-weight:400;letter-spacing:-0.236px;font-family:'Liberation Sans',sans-serif;">Accessibility: Investigate</div>
<svg class="a" style="left:948.5px;top:710.5px;" width="12" height="9" viewBox="0 0 12 9"><rect x="0.5" y="0.5" width="10" height="6.5" fill="none" stroke="#555" stroke-width="1"/><circle cx="9" cy="6.5" r="2.3" fill="#555"/></svg>
<div class="a " style="left:961.50px;top:710.65px;font-size:8.5px;line-height:11.899999999999999px;color:#3a3a3a;font-weight:400;letter-spacing:-0.247px;font-family:'Liberation Sans',sans-serif;">Display Settings</div>
<svg class="a" style="left:1030px;top:710px;" width="11" height="12" viewBox="0 0 11 12"><path d="M0.5 3 V0.5 H3 M8 0.5 H10.5 V3 M10.5 9 V11.5 H8 M3 11.5 H0.5 V9" fill="none" stroke="#555" stroke-width="0.9"/><path d="M3 2.5 H6.5 L8.5 4.5 V9.5 H3 Z" fill="none" stroke="#555" stroke-width="1"/></svg>
<div class="a " style="left:1043.00px;top:710.65px;font-size:8.5px;line-height:11.899999999999999px;color:#3a3a3a;font-weight:400;letter-spacing:-0.549px;font-family:'Liberation Sans',sans-serif;">Focus</div>
<svg class="a" style="left:1080.5px;top:710px;" width="11" height="10" viewBox="0 0 11 10"><path d="M0.5 0.5 H5 V9.5 H0.5 Z M6 0.5 H10.5 V9.5 H6 Z" fill="none" stroke="#555" stroke-width="1"/><path d="M1.5 3 H4 M1.5 5 H4 M7 3 H9.5 M7 5 H9.5" stroke="#555" stroke-width="0.7"/></svg>
<div class="a" style="left:1100.4px;top:707.5px;width:27.5px;height:14.5px;background:#dedede"></div>
<svg class="a" style="left:1109px;top:709.5px;" width="10" height="12" viewBox="0 0 10 12"><rect x="0.5" y="0.5" width="8.5" height="11" fill="none" stroke="#555" stroke-width="1"/><path d="M2.5 3 H7 M2.5 5 H7 M2.5 7 H7" stroke="#555" stroke-width="0.8"/></svg>
<svg class="a" style="left:1136.5px;top:709.5px;" width="12" height="12" viewBox="0 0 12 12"><rect x="0.5" y="0.5" width="8.5" height="10" fill="none" stroke="#555" stroke-width="1"/><path d="M2.5 3 H7 M2.5 5 H5" stroke="#555" stroke-width="0.8"/><circle cx="8.5" cy="8.5" r="3" fill="#555"/></svg>
<div class="a" style="left:1160.5px;top:715px;width:5.5px;height:1.2000000000000455px;background:#666"></div>
<div class="a" style="left:1169px;top:715.3px;width:70px;height:1.0px;background:#777"></div>
<div class="a" style="left:1206px;top:711.5px;width:4px;height:8.0px;background:#555;border-radius:1px"></div>
<div class="a" style="left:1242px;top:715px;width:6.5px;height:1.2000000000000455px;background:#666"></div>
<div class="a" style="left:1244.7px;top:712.5px;width:1.2000000000000455px;height:6.2999999999999545px;background:#666"></div>
<div class="a " style="left:1258.00px;top:710.65px;font-size:8.5px;line-height:11.899999999999999px;color:#3a3a3a;font-weight:400;letter-spacing:-0.935px;font-family:'Liberation Sans',sans-serif;">140%</div>
</body></html>
